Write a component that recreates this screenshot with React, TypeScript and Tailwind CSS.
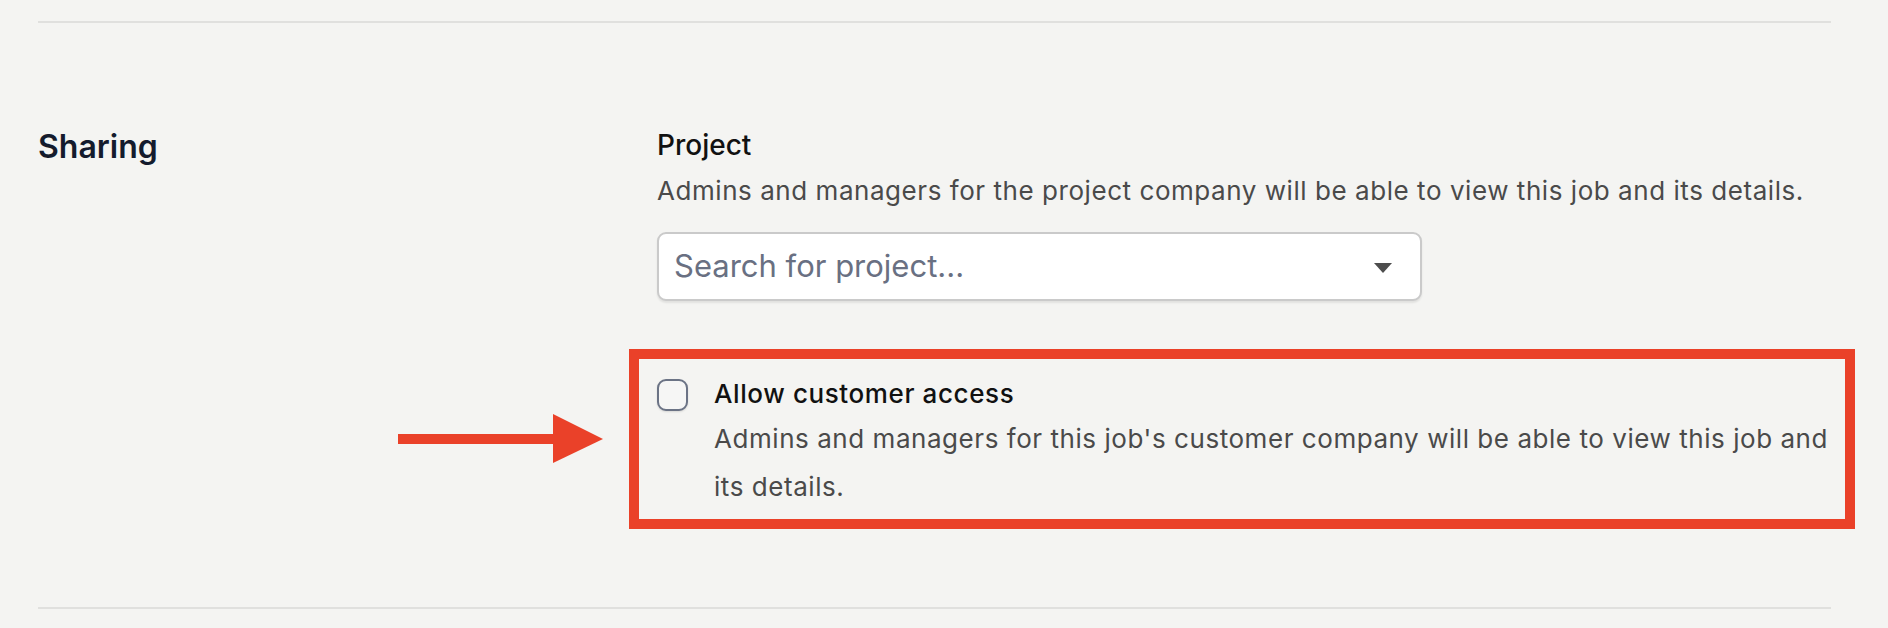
export default function App() {
  return (
    <div
      className="min-h-screen bg-[#f4f4f2] px-[38px] pt-[21px]"
      style={{ fontFamily: 'Inter, "Noto Sans", sans-serif' }}
    >
      <div className="w-[1793px] border-t-2 border-[#e0e0de]" />

      {/* Sharing section */}
      <div className="flex items-start pt-[104px] pb-[96px]">
        <div className="w-[619px] shrink-0">
          <h2 className="text-[32px] leading-[40px] font-semibold text-[#141b2d]">Sharing</h2>
        </div>

        <div className="w-[1174px] flex flex-col">
          <div className="mt-[1px] text-[28px] leading-[34px] font-medium text-[#111111]">Project</div>
          <p className="mt-[11px] text-[26px] leading-[36px] tracking-[0.55px] text-[#4a4a4a]">
            Admins and managers for the project company will be able to view this job and its details.
          </p>

          <div className="mt-[23px] w-[765px] h-[69px] flex items-center justify-between bg-white border-2 border-[#cacaca] rounded-[9px] pl-[15px] pr-[28px] shadow-[0_2px_2px_rgba(0,0,0,0.08)]">
            <span className="text-[31px] text-[#697082]">Search for project...</span>
            <svg width="18" height="10" viewBox="0 0 18 10" className="mt-[3px]">
              <polygon points="0,0 18,0 9,10" fill="#4d4d4d" />
            </svg>
          </div>

          {/* Customer access */}
          <div className="relative mt-[75px] flex items-start gap-[26px]">
            <div className="mt-[3px] w-[31px] h-[32px] shrink-0 rounded-[9px] border-[2.5px] border-[#6b7385] bg-[#f6f6f5] shadow-[0_1px_2px_rgba(0,0,0,0.12)]" />
            <div className="flex flex-col">
              <div className="text-[26px] leading-[36px] tracking-[0.6px] font-medium text-[#111111]">Allow customer access</div>
              <p className="mt-[3px] text-[26px] leading-[48px] tracking-[0.55px] text-[#4a4a4a]">
                Admins and managers for this job's customer company will be able to view this job and its details.
              </p>
            </div>

            {/* annotation */}
            <div className="absolute left-[-28px] top-[-27px] w-[1226px] h-[180px] border-[10px] border-[#ea4129] pointer-events-none" />
            <svg
              className="absolute left-[-259px] top-[38px]"
              width="205"
              height="50"
              viewBox="0 0 205 50"
            >
              <rect x="0" y="20" width="158" height="10" fill="#ea4129" />
              <polygon points="155,0 205,25 155,49" fill="#ea4129" />
            </svg>
          </div>
        </div>
      </div>

      <div className="w-[1793px] border-t-2 border-[#e0e0de]" />
    </div>
  );
}
